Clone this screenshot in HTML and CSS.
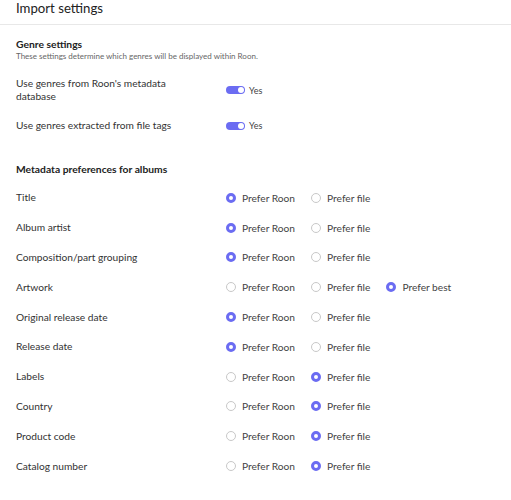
FILE: index.html
```html
<!DOCTYPE html>
<html>
<head>
<meta charset="utf-8">
<link rel="stylesheet" href="styles.css">
</head>
<body>
<div class="header"><h1>Import settings</h1></div>
<div class="content">
  <section class="group">
    <h2>Genre settings</h2>
    <p class="sub">These settings determine which genres will be displayed within Roon.</p>
    <div class="toggle-row first">
      <div class="label">Use genres from Roon's metadata database</div>
      <div class="control"><span class="toggle"></span><span class="yes">Yes</span></div>
    </div>
    <div class="toggle-row">
      <div class="label">Use genres extracted from file tags</div>
      <div class="control"><span class="toggle"></span><span class="yes">Yes</span></div>
    </div>
  </section>
  <section class="group meta">
    <h2>Metadata preferences for albums</h2>
    <div class="row"><div class="label">Title</div><div class="opts"><span class="opt on">Prefer Roon</span><span class="opt">Prefer file</span></div></div>
    <div class="row"><div class="label">Album artist</div><div class="opts"><span class="opt on">Prefer Roon</span><span class="opt">Prefer file</span></div></div>
    <div class="row"><div class="label">Composition/part grouping</div><div class="opts"><span class="opt on">Prefer Roon</span><span class="opt">Prefer file</span></div></div>
    <div class="row"><div class="label">Artwork</div><div class="opts"><span class="opt">Prefer Roon</span><span class="opt">Prefer file</span><span class="opt on">Prefer best</span></div></div>
    <div class="row"><div class="label">Original release date</div><div class="opts"><span class="opt on">Prefer Roon</span><span class="opt">Prefer file</span></div></div>
    <div class="row"><div class="label">Release date</div><div class="opts"><span class="opt on">Prefer Roon</span><span class="opt">Prefer file</span></div></div>
    <div class="row"><div class="label">Labels</div><div class="opts"><span class="opt">Prefer Roon</span><span class="opt on">Prefer file</span></div></div>
    <div class="row"><div class="label">Country</div><div class="opts"><span class="opt">Prefer Roon</span><span class="opt on">Prefer file</span></div></div>
    <div class="row"><div class="label">Product code</div><div class="opts"><span class="opt">Prefer Roon</span><span class="opt on">Prefer file</span></div></div>
    <div class="row"><div class="label">Catalog number</div><div class="opts"><span class="opt">Prefer Roon</span><span class="opt on">Prefer file</span></div></div>
  </section>
</div>
</body>
</html>
```

FILE: styles.css
```css
html, body {
  margin: 0;
  padding: 0;
  background: #fff;
  font-family: Lato, "Open Sans", sans-serif;
  color: #333;
}
.header {
  height: 25px;
  border-bottom: 1px solid #e8e8e8;
  box-sizing: border-box;
}
.header h1 {
  margin: 0;
  padding-left: 16px;
  font-size: 13.2px;
  font-weight: 400;
  line-height: 17px;
  color: #222;
}
.content {
  padding-left: 16px;
}
.group h2 {
  margin: 0;
  font-size: 10.3px;
  font-weight: 700;
  color: #222;
  line-height: 13px;
}
.group:first-child h2 {
  padding-top: 13px;
}
.sub {
  margin: 0;
  font-size: 8px;
  line-height: 10px;
  color: #666;
}
.toggle-row {
  display: flex;
  align-items: center;
  margin-top: 16px;
}
.toggle-row.first {
  margin-top: 16px;
}
.label {
  width: 210px;
  flex: none;
  font-size: 10.2px;
  line-height: 13px;
  color: #333;
}
.toggle-row .label {
  width: 170px;
  margin-right: 40px;
}
.control {
  display: flex;
  align-items: center;
  gap: 4px;
}
.toggle {
  width: 19px;
  height: 8px;
  border-radius: 4px;
  background: #6b6cf2;
  position: relative;
}
.toggle::after {
  content: "";
  position: absolute;
  right: 1px;
  top: 1px;
  width: 6px;
  height: 6px;
  border-radius: 50%;
  background: #fff;
}
.yes {
  font-size: 9px;
  color: #444;
}
.meta {
  margin-top: 31px;
}
.row {
  display: flex;
  align-items: center;
  height: 29.8px;
}
.meta h2 {
  margin-bottom: 7px;
}
.opts {
  display: flex;
  gap: 16px;
}
.opt {
  display: flex;
  align-items: center;
  font-size: 10.2px;
  color: #444;
}
.opt::before {
  content: "";
  width: 10px;
  height: 10px;
  box-sizing: border-box;
  border-radius: 50%;
  border: 1px solid #c8c8c8;
  margin-right: 6px;
  flex: none;
}
.opt.on::before {
  border: 3px solid #6b6cf2;
  background: #fff;
}
```
